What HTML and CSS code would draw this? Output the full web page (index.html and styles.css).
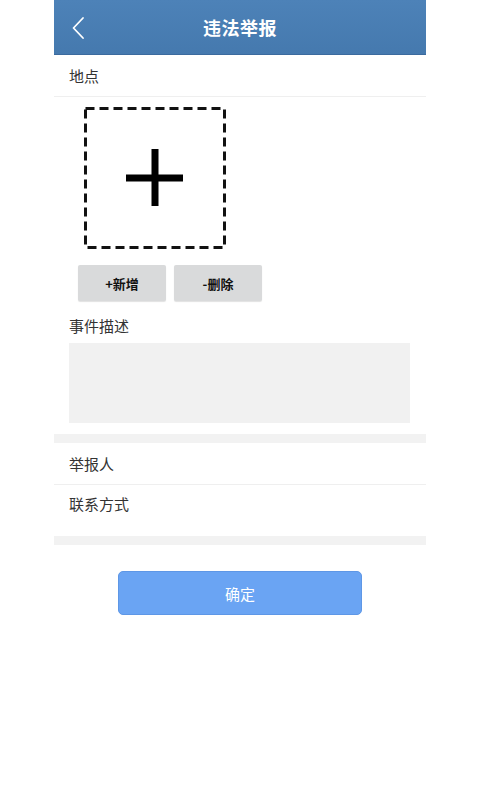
FILE: index.html
```html
<!DOCTYPE html>
<html lang="zh-CN">
<head>
<meta charset="utf-8">
<title>违法举报</title>
<link rel="stylesheet" href="styles.css">
</head>
<body>
<div class="page">
  <header class="topbar">
    <span class="back">
      <svg width="14" height="24" viewBox="0 0 14 24"><path d="M12 2 L2.5 12 L12 22" fill="none" stroke="#ffffff" stroke-width="1.8" stroke-linecap="round" stroke-linejoin="round"/></svg>
    </span>
    <h1 class="title">违法举报</h1>
  </header>

  <div class="row first">地点</div>

  <div class="upload">
    <svg class="uploadbox" width="142" height="142" viewBox="0 0 142 142">
      <rect x="1.5" y="1.5" width="139" height="139" fill="none" stroke="#111" stroke-width="3" stroke-dasharray="9 5"/>
      <rect x="42" y="67.5" width="57" height="7" fill="#000"/>
      <rect x="67.5" y="42" width="7" height="57" fill="#000"/>
    </svg>
  </div>

  <div class="btns">
    <button class="gbtn">+新增</button>
    <button class="gbtn">-删除</button>
  </div>

  <div class="desc-label">事件描述</div>
  <div class="desc"></div>

  <div class="band"></div>
  <div class="row line">举报人</div>
  <div class="row tall">联系方式</div>
  <div class="band"></div>

  <div class="submit-wrap">
    <button class="submit">确定</button>
  </div>
</div>
</body>
</html>
```

FILE: styles.css
```css
html, body {
  margin: 0;
  padding: 0;
  background: #ffffff;
}
body {
  font-family: "Noto Sans CJK SC", "Noto Sans", sans-serif;
  color: #333333;
}
.page {
  width: 372px;
  margin: 0 auto;
  background: #ffffff;
  min-height: 800px;
}
.topbar {
  height: 54px;
  background: linear-gradient(#4d82b8, #4579ae);
  border-bottom: 1px solid #3b6a9e;
  display: flex;
  align-items: center;
  justify-content: center;
  position: relative;
}
.back {
  position: absolute;
  left: 17px;
  top: 16px;
  display: flex;
}
.title {
  margin: 0;
  font-size: 18px;
  font-weight: bold;
  color: #ffffff;
  line-height: 1;
  letter-spacing: 0.5px;
}
.row {
  height: 41px;
  padding-left: 15px;
  font-size: 15px;
  display: flex;
  align-items: center;
  color: #333;
}
.row.first {
  border-bottom: 1px solid #efefef;
}
.row.line {
  border-bottom: 1px solid #efefef;
}
.row.tall {
  height: 51px;
  align-items: flex-start;
  padding-top: 8px;
  box-sizing: border-box;
}
.upload {
  padding-top: 10px;
  padding-left: 30px;
  display: flex;
}
.uploadbox {
  display: block;
}
.btns {
  display: flex;
  gap: 8px;
  padding-left: 24px;
  margin-top: 16px;
}
.gbtn {
  width: 88px;
  height: 36px;
  border: none;
  border-radius: 2px;
  background: #d9dadb;
  box-shadow: 0 1px 1px rgba(0,0,0,0.12);
  font-family: "Noto Sans CJK SC", sans-serif;
  font-size: 13px;
  font-weight: 600;
  color: #111;
  padding: 0;
}
.desc-label {
  padding-left: 15px;
  margin-top: 14px;
  font-size: 15px;
  line-height: 22px;
  color: #333;
}
.desc {
  margin: 6px 16px 0 15px;
  height: 80px;
  background: #f1f1f1;
}
.band {
  height: 9px;
  background: #f2f2f2;
  margin-top: 11px;
}
.row.tall + .band {
  margin-top: 0;
}
.submit-wrap {
  display: flex;
  padding-left: 64px;
  margin-top: 26px;
}
.submit {
  width: 244px;
  height: 44px;
  border: 1px solid #5e97e6;
  border-radius: 5px;
  background: #6aa4f3;
  color: #ffffff;
  font-family: "Noto Sans CJK SC", sans-serif;
  font-size: 15px;
  padding: 0;
}
```
